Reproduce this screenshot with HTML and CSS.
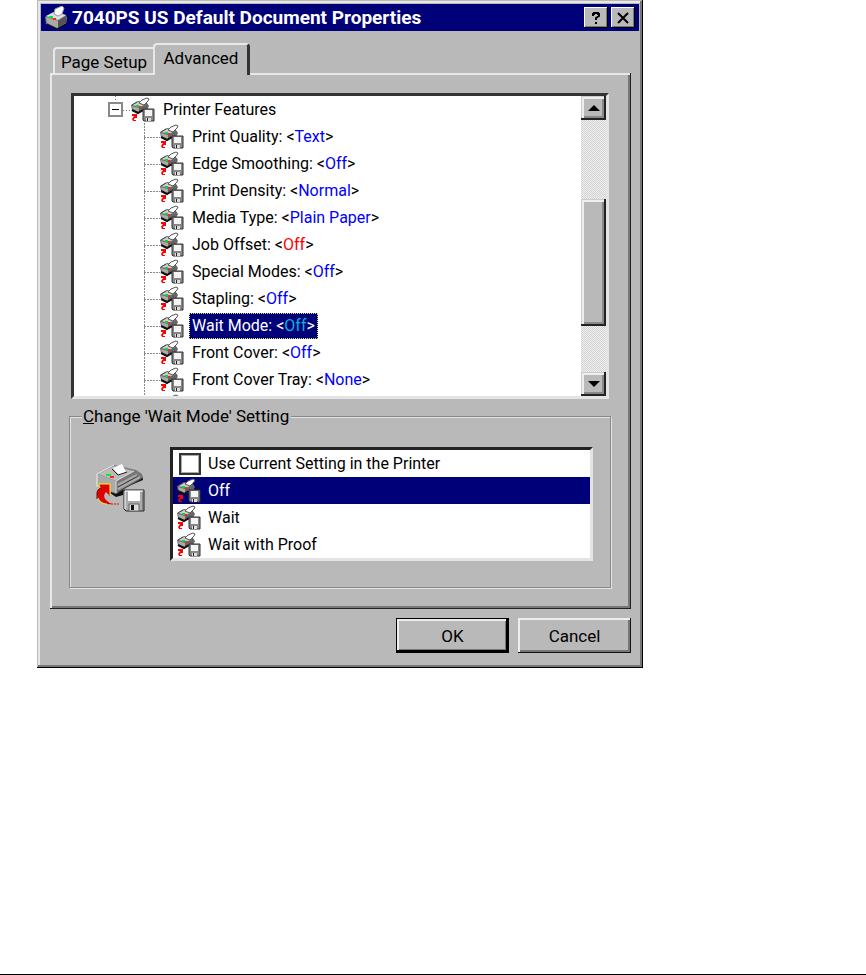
FILE: index.html
```html
<!DOCTYPE html>
<html lang="en">
<head>
  <meta charset="UTF-8" />
  <meta name="viewport" content="width=device-width, initial-scale=1.0" />
  <title>7040PS US Default Document Properties</title>
  <link rel="stylesheet" href="styles.css">
</head>
<body>
  <svg class="sprites" aria-hidden="true">
    <symbol id="printer" viewBox="0 0 24 24">
      <path d="M1 11 9 6 22 9 23 12 22 18 13 23 2 18Z" fill="#777"/>
      <path d="M2 10 10 6 22 9 14 14Z" fill="#ddd"/>
      <path d="M2 11 14 15 14 22 3 17Z" fill="#aaa"/>
      <path d="M14 15 22 10 22 17 14 22Z" fill="#555"/>
      <path d="M3 18 13 23 22 18" fill="none" stroke="#000"/>
      <path d="M10 8 11 3 18 0 20 2 18 8 14 10Z" fill="#fff" stroke="#999"/>
      <path d="M5 11h4" stroke="#0e3" stroke-width="2"/>
      <path d="M9 13h3" stroke="#f22" stroke-width="2"/>
    </symbol>
    <symbol id="feature" viewBox="0 0 24 26">
      <path d="M0 8 7 4 16 6 18 9 16 13 8 16 1 13Z" fill="#666"/>
      <path d="M1 8 7 5 15 7 9 10Z" fill="#ccc"/>
      <path d="M1 9 8 11v4L2 13Z" fill="#aaa"/>
      <path d="M1 13 7 16l5-3" fill="none" stroke="#111" stroke-width="2"/>
      <path d="M1 8l5-3" fill="none" stroke="#444"/>
      <path d="M8 6 11 3 16 1 18 2 17 4 13 8Z" fill="#fff" stroke="#555"/>
      <path d="M5 9h3" stroke="#0d3" stroke-width="2"/>
      <path d="M8 10h2" stroke="#f22" stroke-width="2"/>
      <path d="M1 17h5v4H4l-1 1v1h2v1H2l-1-2 2-3H1Z" fill="#f00"/>
      <path d="M12 12h11v12H13l-1-1Z" fill="#888" stroke="#333"/>
      <path d="M14 13h7v6h-7Z" fill="#f4f4f4"/>
      <path d="M15 21h5v3h-5Z" fill="#ddd"/>
      <path d="M16 21h1v3h-1Z" fill="#222"/>
    </symbol>
    <symbol id="feature-large" viewBox="0 0 50 50">
      <path d="M14 30 20 34 27 32 28 25 47 17 46 12 40 9Z" fill="#111"/>
      <path d="M1 11 18 2 40 7 46 11 46 15 20 31 1 24Z" fill="#777"/>
      <path d="M2 11 18 3 38 8 20 18Z" fill="#bbb"/>
      <path d="M1 11 20 18V30L1 24Z" fill="#aaa"/>
      <path d="M1 24V11L18 2" fill="none" stroke="#eee"/>
      <path d="M20 30V18L38 8" fill="none" stroke="#ddd"/>
      <path d="M22 22 41 12M22 26 44 14" stroke="#aaa" stroke-width="2"/>
      <path d="M22 24 42 13M22 29 45 16" stroke="#444"/>
      <path d="M17 5 26 1 30 9 23 12Z" fill="#fff"/>
      <path d="M16 6 22 12 31 9" fill="none" stroke="#222"/>
      <path d="M10 12h5" stroke="#0e3" stroke-width="2"/>
      <path d="M14 14h4" stroke="#f22" stroke-width="2"/>
      <path d="M3 21h11v12l-4-4c-3 3-3 8 6 12-9 1-15-4-15-10 0-3 1-5 4-6Z" fill="#d00"/>
      <path d="M3 25v-4h11v11M2 35c2 4 4 6 9 6" fill="none" stroke="#fe0"/>
      <path d="M1 36V31c0-3 1-5 4-6" fill="none" stroke="#600"/>
      <path d="M15 41h9" stroke="#e00" stroke-dasharray="2 1"/>
      <path d="M28 27h20v21H30l-2-2Z" fill="#aaa" stroke="#222"/>
      <path d="M29 46V28h18" fill="none" stroke="#fff"/>
      <path d="M32 28h12v10H32Z" fill="#fff"/>
      <path d="M33 41h10v7H33Z" fill="#ddd" stroke="#666"/>
      <path d="M35 42h3v5h-3Z" fill="#111"/>
      <path d="M47 29v18" stroke="#555"/>
    </symbol>
  </svg>

  <main class="dialog">
    <header class="titlebar">
      <svg class="title-icon"><use href="#printer"/></svg>
      <h1 class="title">7040PS US Default Document Properties</h1>
      <button class="caption-btn" aria-label="Help">
        <svg viewBox="0 0 14 14"><path d="M4 5V3h1V2h4v1h1v2L7 7v2M7 11v2" fill="none" stroke="#000" stroke-width="2"/></svg>
      </button>
      <button class="caption-btn" aria-label="Close">
        <svg viewBox="0 0 14 14"><path d="M2 2 12 12M12 2 2 12" stroke="#000" stroke-width="2"/></svg>
      </button>
    </header>

    <div class="content">
      <div class="tabs" role="tablist">
        <button class="tab" role="tab" aria-selected="false">Page Setup</button>
        <button class="tab active" role="tab" aria-selected="true">Advanced</button>
      </div>

      <section class="panel" role="tabpanel">
        <div class="tree">
          <ul class="tree-list">
            <li class="tree-root"><button class="toggle" aria-label="Collapse"></button><svg class="icon"><use href="#feature"/></svg><span class="name">Printer Features</span></li>
            <li>
              <ul class="branch">
                <li class="item"><svg class="icon"><use href="#feature"/></svg><span class="name">Print Quality: &lt;<span class="value">Text</span>&gt;</span></li>
                <li class="item"><svg class="icon"><use href="#feature"/></svg><span class="name">Edge Smoothing: &lt;<span class="value">Off</span>&gt;</span></li>
                <li class="item"><svg class="icon"><use href="#feature"/></svg><span class="name">Print Density: &lt;<span class="value">Normal</span>&gt;</span></li>
                <li class="item"><svg class="icon"><use href="#feature"/></svg><span class="name">Media Type: &lt;<span class="value">Plain Paper</span>&gt;</span></li>
                <li class="item"><svg class="icon"><use href="#feature"/></svg><span class="name">Job Offset: &lt;<span class="value changed">Off</span>&gt;</span></li>
                <li class="item"><svg class="icon"><use href="#feature"/></svg><span class="name">Special Modes: &lt;<span class="value">Off</span>&gt;</span></li>
                <li class="item"><svg class="icon"><use href="#feature"/></svg><span class="name">Stapling: &lt;<span class="value">Off</span>&gt;</span></li>
                <li class="item"><svg class="icon"><use href="#feature"/></svg><span class="name selected">Wait Mode: &lt;<span class="value">Off</span>&gt;</span></li>
                <li class="item"><svg class="icon"><use href="#feature"/></svg><span class="name">Front Cover: &lt;<span class="value">Off</span>&gt;</span></li>
                <li class="item"><svg class="icon"><use href="#feature"/></svg><span class="name">Front Cover Tray: &lt;<span class="value">None</span>&gt;</span></li>
                <li class="item"><svg class="icon"><use href="#feature"/></svg></li>
              </ul>
            </li>
          </ul>
          <div class="scrollbar">
            <button class="scroll-btn" aria-label="Scroll up"><svg viewBox="0 0 12 6"><path d="M6 0 12 6H0Z"/></svg></button>
            <div class="track-above"></div>
            <div class="thumb"></div>
            <div class="track-below"></div>
            <button class="scroll-btn" aria-label="Scroll down"><svg viewBox="0 0 12 6"><path d="M0 0H12L6 6Z"/></svg></button>
          </div>
        </div>

        <fieldset class="group">
          <legend><u>C</u>hange 'Wait Mode' Setting</legend>
          <div class="group-body">
            <svg class="large-icon"><use href="#feature-large"/></svg>
            <div class="options">
              <label class="option" for="current"><input type="checkbox" id="current" class="check">Use Current Setting in the Printer</label>
              <div class="option chosen"><svg class="icon"><use href="#feature"/></svg>Off</div>
              <div class="option"><svg class="icon"><use href="#feature"/></svg>Wait</div>
              <div class="option"><svg class="icon"><use href="#feature"/></svg>Wait with Proof</div>
            </div>
          </div>
        </fieldset>
      </section>

      <div class="buttons">
        <button class="btn default">OK</button>
        <button class="btn">Cancel</button>
      </div>
    </div>
  </main>
  <hr class="page-rule">
</body>
</html>
```

FILE: styles.css
```css
* {
  box-sizing: border-box;
}

body {
  margin: 0;
  min-height: 100vh;
  display: flex;
  flex-direction: column;
  background: #fff;
  color: #000;
  font: 17px/20px Roboto, "Liberation Sans", sans-serif;
}

button {
  font: inherit;
  color: inherit;
  background: #b9b9b9;
  border: none;
  padding: 0;
}

ul {
  list-style: none;
  margin: 0;
  padding: 0;
}

.sprites {
  position: absolute;
  width: 0;
  height: 0;
}

.dialog {
  max-width: 606px;
  margin: 0 37px;
  padding: 4px;
  background: #b9b9b9;
  box-shadow: inset -1px -1px #000, inset 1px 1px #b9b9b9, inset -3px -3px #777, inset 3px 3px #e8e8e8;
}

.titlebar {
  display: flex;
  align-items: center;
  height: 27px;
  padding: 0 4px 0 3px;
  background: #000078;
  color: #fff;
}

.title-icon {
  width: 24px;
  height: 24px;
}

.title {
  flex: 1;
  margin: 0 0 0 4px;
  font-size: 19px;
  line-height: 24px;
  font-weight: 700;
  white-space: nowrap;
}

.caption-btn {
  display: flex;
  align-items: center;
  justify-content: center;
  width: 24px;
  height: 21px;
  margin-left: 3px;
  box-shadow: inset -1px -1px #000, inset 1px 1px #fff, inset -2px -2px #777;
}

.caption-btn svg {
  width: 14px;
  height: 14px;
}

.content {
  padding: 12px 8px 11px 9px;
}

.tabs {
  display: flex;
  align-items: flex-end;
  padding-left: 3px;
}

.tab {
  width: 100px;
  height: 26px;
  padding-top: 2px;
  border-top: 2px solid #e8e8e8;
  border-left: 2px solid #e8e8e8;
  border-radius: 4px 0 0 0;
}

.tab.active {
  position: relative;
  width: 97px;
  height: 32px;
  margin-bottom: -2px;
  padding: 0 0 4px;
  border-right: 3px solid #333;
  border-radius: 4px 4px 0 0;
}

.panel {
  padding: 20px 20px 21px 19px;
  box-shadow: inset -1px -1px #222, inset 2px 2px #e8e8e8, inset -3px -3px #777;
}

.tree {
  display: flex;
  height: 306px;
  margin: 0 2px;
  background: #fff;
  border: 3px solid #e4e4e4;
  border-top-color: #333;
  border-left-color: #333;
  font-size: 16px;
}

.tree-list {
  flex: 1;
  overflow: hidden;
}

.tree-root,
.item {
  display: flex;
  align-items: center;
  height: 27px;
}

.tree-root {
  padding-left: 34px;
  background: repeating-linear-gradient(#777 0 1px, #fff 1px 3px) 41px 0 / 1px 8px no-repeat,
    repeating-linear-gradient(90deg, #777 0 1px, #fff 1px 3px) 49px 14px / 9px 1px no-repeat;
}

.toggle {
  width: 15px;
  height: 15px;
  margin-right: 8px;
  border: 2px solid #888;
  background: linear-gradient(#000, #000) center / 7px 1px no-repeat #fff;
}

.icon {
  flex: none;
  width: 24px;
  height: 26px;
}

.name {
  margin-left: 5px;
  padding: 3px;
  line-height: 20px;
  white-space: nowrap;
}

.branch {
  margin-left: 70px;
  background: repeating-linear-gradient(#888 0 2px, #fff 2px 3px) 0 0 / 1px 100% no-repeat;
}

.item {
  padding-left: 16px;
  background: repeating-linear-gradient(90deg, #888 0 2px, #fff 2px 3px) 0 14px / 16px 1px no-repeat;
}

.value {
  color: #00f;
}

.value.changed {
  color: #f00;
}

.selected {
  background: #000078;
  color: #fff;
  outline: 1px dotted #e0e060;
  outline-offset: -1px;
}

.selected .value {
  color: #00b4dc;
}

.scrollbar {
  display: flex;
  flex-direction: column;
  width: 25px;
  background: repeating-conic-gradient(#d2d2d2 0 25%, #f0f0f0 0 50%) 0 0 / 2px 2px;
}

.scroll-btn,
.thumb {
  flex: none;
  background: #b9b9b9;
  box-shadow: inset -2px -2px #222, inset 1px 1px #ccc, inset 3px 3px #eee, inset -4px -4px #888;
}

.scroll-btn {
  display: flex;
  align-items: center;
  justify-content: center;
  height: 24px;
}

.scroll-btn svg {
  width: 12px;
  height: 6px;
}

.track-above {
  flex: 79;
}

.thumb {
  height: 127px;
}

.track-below {
  flex: 46;
}

.group {
  min-width: 0;
  margin: 7px 0 0;
  padding: 0;
  border: 1px solid #888;
  box-shadow: inset 1px 1px #e4e4e4, 1px 1px #e4e4e4;
}

.group legend {
  margin-left: 12px;
  padding: 0 2px 0 1px;
  background: #b9b9b9;
}

.group-body {
  display: flex;
  align-items: flex-start;
  padding: 21px 17px 26px 26px;
}

.large-icon {
  flex: none;
  width: 50px;
  height: 50px;
  margin: 16px 24px 0 0;
}

.options {
  flex: 1;
  background: #fff;
  border: 3px solid #e4e4e4;
  border-top-color: #222;
  border-left-color: #222;
  font-size: 16px;
}

.option {
  display: flex;
  align-items: center;
  gap: 7px;
  height: 27px;
  padding-left: 4px;
}

.chosen {
  background: #000078;
  color: #fff;
}

.check {
  appearance: none;
  width: 22px;
  height: 22px;
  margin: 0 0 0 2px;
  background: #fff;
  border: 2px solid #333;
  box-shadow: inset 1px 1px #aaa, inset -1px -1px #aaa;
}

.buttons {
  display: flex;
  justify-content: flex-end;
  gap: 9px;
  margin-top: 9px;
}

.btn {
  width: 113px;
  height: 35px;
  box-shadow: inset -1px -1px #111, inset 2px 2px #eee, inset -3px -3px #777;
}

.btn.default {
  border: 1px solid #000;
  box-shadow: inset -2px -2px #000, inset 2px 2px #eee, inset -3px -3px #777;
}

.page-rule {
  width: 100%;
  margin: auto 0 0;
  border: none;
  border-top: 1px solid #000;
}
```
